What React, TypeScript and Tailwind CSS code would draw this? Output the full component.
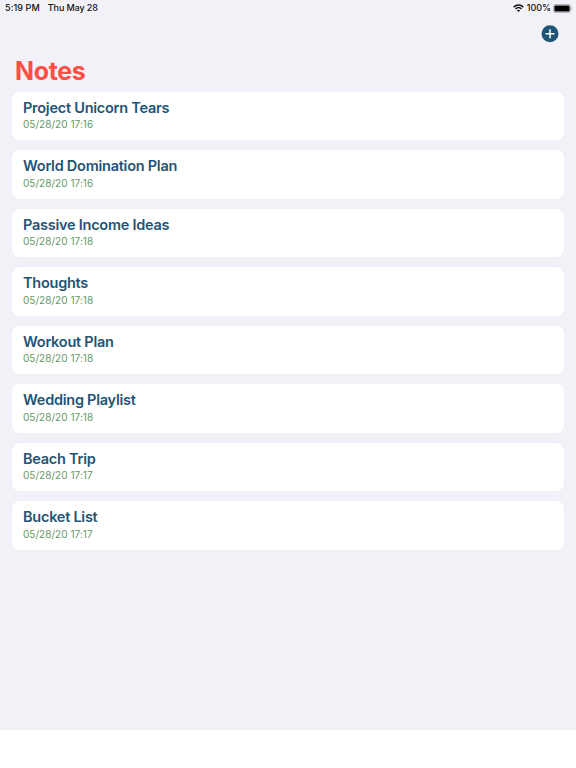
interface Note {
  readonly title: string
  readonly date: string
}

const NOTES: readonly Note[] = [
  { title: 'Project Unicorn Tears', date: '05/28/20 17:16' },
  { title: 'World Domination Plan', date: '05/28/20 17:16' },
  { title: 'Passive Income Ideas', date: '05/28/20 17:18' },
  { title: 'Thoughts', date: '05/28/20 17:18' },
  { title: 'Workout Plan', date: '05/28/20 17:18' },
  { title: 'Wedding Playlist', date: '05/28/20 17:18' },
  { title: 'Beach Trip', date: '05/28/20 17:17' },
  { title: 'Bucket List', date: '05/28/20 17:17' },
]

export default function App() {
  return (
    <div className="h-screen overflow-hidden bg-white font-['Inter',sans-serif]">
      <div className="flex h-[730px] flex-col bg-[#f2f1f7]">
        <StatusBar />
        <header className="px-[15px]">
          <div className="flex h-[35px] items-center justify-end pr-[2px]">
            <button aria-label="Add note" className="block" type="button">
              <AddIcon />
            </button>
          </div>
          <h1 className="mt-[4px] h-[36.7px] text-[25px] leading-[33px] font-bold tracking-[-0.35px] text-[#ff4f44]">
            Notes
          </h1>
        </header>
        <ul className="flex flex-col gap-[10px] pr-[12px] pl-[11.5px]">
          {NOTES.map((note) => (
            <NoteCard key={note.title} note={note} />
          ))}
        </ul>
      </div>
    </div>
  )
}

function NoteCard(props: { readonly note: Note }) {
  return (
    <li className="h-[48.5px] rounded-[8px] bg-white pt-[6px] pl-[11.5px]">
      <h2 className="text-[14.5px] leading-[19px] font-semibold tracking-[-0.25px] text-[#1f5476]">
        {props.note.title}
      </h2>
      <p className="mt-[0.8px] text-[10px] leading-[14px] tracking-[0.04px] text-[#5f9a68]">
        {props.note.date}
      </p>
    </li>
  )
}

function StatusBar() {
  return (
    <div className="flex h-4 items-center justify-between pr-[4px] pl-[5px] text-[9px] leading-4 font-medium text-[#111]">
      <div className="flex gap-[8px]">
        <span className="tracking-[0.1px]">5:19 PM</span>
        <span className="tracking-[-0.1px]">Thu May 28</span>
      </div>
      <div className="flex items-center">
        <WifiIcon />
        <span className="mr-[1.5px] ml-[3px]">100%</span>
        <BatteryIcon />
      </div>
    </div>
  )
}

function AddIcon() {
  return (
    <svg className="block size-[18px]" fill="none" viewBox="0 0 18 18">
      <circle cx="9" cy="8.8" fill="#1f5476" r="8.5" />
      <path d="M9 4.8v8M5 8.8h8" stroke="#fff" strokeLinecap="round" strokeWidth="1.5" />
    </svg>
  )
}

function WifiIcon() {
  return (
    <svg className="block h-[8px] w-[11px]" fill="none" viewBox="0 0 11 8">
      <path d="M.7 3.1C3.4.4 7.6.4 10.3 3.1" stroke="#111" strokeWidth="1.5" />
      <path d="M2.5 4.9c1.7-1.6 4.3-1.6 6 0" stroke="#111" strokeWidth="1.4" />
      <path d="M5.5 8 3.8 6.3c.9-.9 2.5-.9 3.4 0z" fill="#111" />
    </svg>
  )
}

function BatteryIcon() {
  return (
    <svg className="block h-[9px] w-[19.5px]" fill="none" viewBox="0 0 19.5 9">
      <rect height="8.2" rx="2.3" stroke="#8f8f93" strokeWidth=".7" width="17.2" x=".4" y=".4" />
      <rect fill="#000" height="6.2" rx="1.3" width="15.2" x="1.4" y="1.4" />
      <path d="M18.4 3.2c.9.3.9 2.3 0 2.6z" fill="#8f8f93" />
    </svg>
  )
}
